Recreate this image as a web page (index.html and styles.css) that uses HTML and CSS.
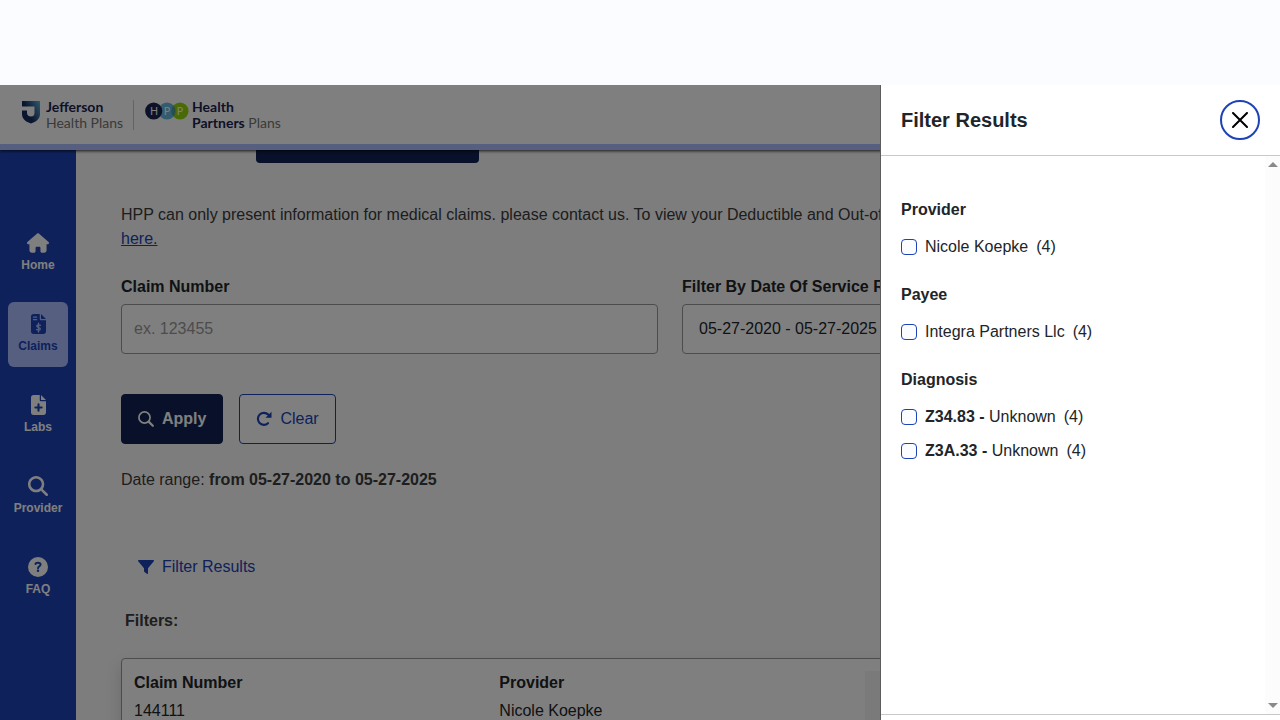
FILE: index.html
```html
<!DOCTYPE html>
<html lang="en">
<head>
<meta charset="utf-8">
<title>Claims</title>
<link rel="stylesheet" href="styles.css">
</head>
<body>
<div class="top-space"></div>
<div class="app">
  <header class="site-header">
    <a class="brand" href="#jefferson">
      <svg class="shield" viewBox="0 0 18 23" width="18" height="23" aria-hidden="true">
        <defs><linearGradient id="shield-fill" x1="0" y1="0.6" x2="1" y2="0"><stop offset="0.3" stop-color="#152a5c"/><stop offset="1" stop-color="#5fb4dc"/></linearGradient></defs>
        <path fill="url(#shield-fill)" d="M0 0H18V13C18 18 14 21 9 22.500C4 21 0 18 0 13V9.500H5V12C5 14 6.500 15.500 9 15.500C11.500 15.500 12.500 14 12.500 12V5.500H0Z"/>
      </svg>
      <span class="brand-text"><b>Jefferson</b><br>Health Plans</span>
    </a>
    <span class="brand-divider"></span>
    <a class="brand" href="#hpp">
      <svg class="dots" viewBox="0 0 44 18" width="44" height="18" aria-hidden="true">
        <circle cx="22" cy="9" r="8.600" fill="#68b8e0"/>
        <circle cx="35" cy="9" r="8.600" fill="#93d50a"/>
        <path d="M28.500 3.300A8.600 8.600 0 0 1 28.500 14.700A8.600 8.600 0 0 1 28.500 3.300Z" fill="#4d9f9c"/>
        <circle cx="8.700" cy="9" r="8.600" fill="#1b2450"/>
        <g class="dot-letters"><text x="9" y="13">H</text><text x="22" y="13">P</text><text x="35" y="13">P</text></g>
      </svg>
      <span class="brand-text"><b>Health</b><br><b>Partners</b> Plans</span>
    </a>
  </header>
  <div class="shell">
    <nav class="sidebar">
      <a class="nav-item" href="#home">
        <svg viewBox="0 0 576 512" width="22" height="20" aria-hidden="true"><path fill="currentColor" d="M575.800 255.500c0 18-15 32.100-32 32.100h-32l.7 160.200c0 35-28 64.200-64 64.200H392c-22 0-40-17.900-40-40V384c0-17.700-14.300-32-32-32H256c-17.700 0-32 14.300-32 32v88c0 22.100-18 40-40 40h-56c-35 0-64-28-64-64V287.600H32c-18 0-32-14-32-32.100 0-9 3-17 10-24L266.400 8c7-7 15-8 22-8s15 2 21 7L564.800 231.500c8 7 12 15 11 24z"/></svg>
        <span>Home</span>
      </a>
      <a class="nav-item active" href="#claims" aria-current="page">
        <svg viewBox="0 0 384 512" width="15" height="20" aria-hidden="true"><path fill="currentColor" d="M64 0C28.700 0 0 28.700 0 64V448c0 35.300 28.700 64 64 64H320c35.300 0 64-28.700 64-64V160H256c-17.700 0-32-14.300-32-32V0H64zM256 0V128H384L256 0z"/><g class="cutout" stroke-width="34"><path d="M64 80H144M64 144H144"/><path d="M192 232V462M240 290C200 270 150 275 148 308C146 350 240 334 238 382C236 420 180 420 142 398"/></g></svg>
        <span>Claims</span>
      </a>
      <a class="nav-item" href="#labs">
        <svg viewBox="0 0 384 512" width="15" height="20" aria-hidden="true"><path fill="currentColor" d="M64 0C28.700 0 0 28.700 0 64V448c0 35.300 28.700 64 64 64H320c35.300 0 64-28.700 64-64V160H256c-17.700 0-32-14.300-32-32V0H64zM256 0V128H384L256 0z"/><path class="cutout" stroke-width="54" d="M192 240V400M112 320H272"/></svg>
        <span>Labs</span>
      </a>
      <a class="nav-item" href="#provider">
        <svg viewBox="0 0 512 512" width="20" height="20" aria-hidden="true"><path fill="currentColor" d="M416 208c0 45.900-14.900 88.300-40 122.700L502.600 457.400c12.500 12.500 12.500 32.800 0 45.300s-32.800 12.500-45.300 0L330.700 376c-34.400 25.200-76.800 40-122.700 40C93.100 416 0 322.900 0 208S93.100 0 208 0S416 93.100 416 208zM208 352a144 144 0 1 0 0-288 144 144 0 1 0 0 288z"/></svg>
        <span>Provider</span>
      </a>
      <a class="nav-item" href="#faq">
        <svg viewBox="0 0 512 512" width="20" height="20" aria-hidden="true"><circle cx="256" cy="256" r="256" fill="currentColor"/><path class="cutout" stroke-width="50" d="M190 180C198 140 318 132 322 194C324 236 256 242 256 290"/><circle class="cutout-dot" cx="256" cy="352" r="32"/></svg>
        <span>FAQ</span>
      </a>
    </nav>
    <main class="content">
      <div class="banner-end"></div>
      <p class="notice">HPP can only present information for medical claims. please contact us. To view your Deductible and Out-of-Pocket information, please click<br><a href="#accumulators">here.</a></p>
      <form class="search">
        <div class="fields">
          <div class="field">
            <label for="claim-number">Claim Number</label>
            <input id="claim-number" type="text" placeholder="ex. 123455">
          </div>
          <div class="field">
            <label for="service-range">Filter By Date Of Service Range</label>
            <input id="service-range" class="range" type="text" value="05-27-2020 - 05-27-2025">
          </div>
        </div>
        <div class="actions">
          <button class="btn primary" type="button">
            <svg viewBox="0 0 16 16" width="16" height="16" aria-hidden="true"><g fill="none" stroke="currentColor"><circle cx="6.500" cy="6.500" r="5.600" stroke-width="1.700"/><path stroke-width="2.200" stroke-linecap="round" d="M10.900 10.900L14.800 14.800"/></g></svg>
            Apply
          </button>
          <button class="btn outline" type="button">
            <svg viewBox="0 0 16 16" width="16" height="16" aria-hidden="true"><path fill="none" stroke="currentColor" stroke-width="2.200" stroke-linecap="round" d="M12 12.200A6 6 0 1 1 12.200 3.600L14 5"/><path fill="currentColor" d="M15.500 .8V6.800H9.500Z"/></svg>
            Clear
          </button>
        </div>
      </form>
      <p class="date-range">Date range: <b>from 05-27-2020 to 05-27-2025</b></p>
      <button class="filter-link" type="button">
        <svg viewBox="0 0 16 14" width="16" height="14" aria-hidden="true"><path fill="currentColor" d="M.6 0H15.400C16 0 16.200.8 15.800 1.300L10 8.200V13.200C10 13.900 9.400 14.200 8.900 13.800L6.500 12C6.200 11.800 6 11.500 6 11.100V8.200L.2 1.300C-.2.8 0 0 .6 0Z"/></svg>
        Filter Results
      </button>
      <p class="filters"><b>Filters:</b></p>
      <section class="claim-card">
        <div class="cell"><b>Claim Number</b><span>144111</span></div>
        <div class="cell"><b>Provider</b><span>Nicole Koepke</span></div>
        <div class="cell"><div class="amounts"></div></div>
      </section>
    </main>
  </div>
  <div class="backdrop"></div>
  <aside class="drawer" aria-labelledby="drawer-title">
    <div class="drawer-head">
      <h2 id="drawer-title">Filter Results</h2>
      <button class="close" type="button" aria-label="Close">
        <svg viewBox="0 0 16 16" width="16" height="16" aria-hidden="true"><path fill="none" stroke="currentColor" stroke-width="2" stroke-linecap="round" d="M1 1L15 15M15 1L1 15"/></svg>
      </button>
    </div>
    <div class="drawer-body">
      <div class="groups">
        <fieldset>
          <legend>Provider</legend>
          <label class="option"><input type="checkbox"><span>Nicole Koepke</span><span>(4)</span></label>
        </fieldset>
        <fieldset>
          <legend>Payee</legend>
          <label class="option"><input type="checkbox"><span>Integra Partners Llc</span><span>(4)</span></label>
        </fieldset>
        <fieldset>
          <legend>Diagnosis</legend>
          <label class="option"><input type="checkbox"><span><b>Z34.83 -</b> Unknown</span><span>(4)</span></label>
          <label class="option"><input type="checkbox"><span><b>Z3A.33 -</b> Unknown</span><span>(4)</span></label>
        </fieldset>
      </div>
      <div class="track">
        <svg viewBox="0 0 10 5" width="10" height="5" aria-hidden="true"><path fill="#8a8a8a" d="M0 5L5 0L10 5Z"/></svg>
        <svg viewBox="0 0 10 5" width="10" height="5" aria-hidden="true"><path fill="#8a8a8a" d="M0 0L5 5L10 0Z"/></svg>
      </div>
    </div>
    <div class="drawer-foot"></div>
  </aside>
</div>
</body>
</html>
```

FILE: styles.css
```css
* { box-sizing: border-box; }
body {
  margin: 0;
  height: 100vh;
  display: flex;
  flex-direction: column;
  overflow: hidden;
  background: #fafcff;
  color: #212529;
  font: 16px/24px "Liberation Sans", Arial, sans-serif;
}
p, h2 { margin: 0; }
button, input { font: inherit; }
.top-space { flex: 0 0 85px; }
.app {
  position: relative;
  flex: 1;
  min-height: 0;
  display: flex;
  flex-direction: column;
  overflow: hidden;
}
.site-header {
  position: relative;
  flex: none;
  display: flex;
  align-items: center;
  height: 65px;
  padding-left: 22px;
  background: #fff;
  border-bottom: 6px solid #acbffe;
  box-shadow: 0 1px 3px rgba(0, 0, 0, .8);
}
.brand {
  display: flex;
  gap: 6px;
  color: #74756f;
  text-decoration: none;
  font: 14px/16px Lato, sans-serif;
}
.brand b { color: #1b2450; font-weight: 700; }
.shield { margin-top: 2px; }
.dots { margin-top: 3px; }
.brand:last-child { gap: 3px; }
.dot-letters { fill: #fff; font: 11px "Noto Sans", sans-serif; text-anchor: middle; }
.brand-divider { width: 1px; height: 30px; margin: 0 11px 0 10px; background: #c8c8c8; }
.shell { flex: 1; min-height: 0; display: flex; }
.sidebar {
  flex: 0 0 76px;
  display: flex;
  flex-direction: column;
  gap: 16px;
  padding: 71px 8px 0;
  background: #1d43b6;
}
.nav-item {
  display: flex;
  flex-direction: column;
  align-items: center;
  gap: 4px;
  padding: 12px 0 13px;
  border-radius: 6px;
  color: #fff;
  font-size: 12px;
  font-weight: bold;
  line-height: 16px;
  text-decoration: none;
}
.nav-item.active { background: #acbffe; color: #1d43b6; }
.cutout { fill: none; stroke: #1d43b6; stroke-linecap: round; }
.active .cutout { stroke: #acbffe; }
.cutout-dot { fill: #1d43b6; }
.content { flex: 1; min-width: 0; padding: 0 61px 0 45px; background: #fafafa; }
.banner-end { width: 223px; height: 13px; margin-left: 135px; border-radius: 0 0 4px 4px; background: #122254; }
.notice { margin-top: 40px; white-space: nowrap; }
.notice, .date-range, .filters { color: #3c3c3c; }
.notice a { color: #1d43b6; }
.search { margin-top: 24px; }
.fields { display: grid; grid-template-columns: 1fr 1fr; gap: 24px; }
.field { display: flex; flex-direction: column; gap: 5px; }
.field label { font-weight: bold; }
.field input {
  height: 50px;
  padding: 0 12px;
  border: 1px solid #999;
  border-radius: 4px;
  background: #fff;
  color: #212529;
}
.field .range { padding: 0 16px; }
.field input::placeholder { color: #999; }
.actions { display: flex; gap: 16px; margin-top: 40px; }
.btn {
  display: flex;
  align-items: center;
  gap: 8px;
  height: 50px;
  padding: 0 16px;
  border: 1px solid #122254;
  border-radius: 4px;
}
.primary { background: #122254; color: #fff; font-weight: bold; }
.outline { border-color: #1d43b6; background: #fff; color: #1d43b6; }
.date-range { margin-top: 24px; }
.filter-link {
  display: flex;
  align-items: center;
  gap: 8px;
  margin-top: 63px;
  padding: 0 17px;
  border: 0;
  background: none;
  color: #1d43b6;
  line-height: 24px;
}
.filters { margin: 30px 0 0 4px; }
.claim-card {
  display: grid;
  grid-template-columns: repeat(3, 1fr);
  margin-top: 25px;
  padding: 12px 0;
  border: 1px solid #999;
  border-radius: 4px;
  background: #fff;
  box-shadow: 0 8px 16px rgba(0, 0, 0, .15);
}
.cell { display: flex; flex-direction: column; gap: 4px; padding: 0 12px; }
.amounts { min-height: 120px; background: #f4f4f4; }
.backdrop { position: absolute; inset: 0; background: rgba(0, 0, 0, .5); }
.drawer {
  position: absolute;
  top: 0;
  right: 0;
  bottom: 0;
  width: 400px;
  display: flex;
  flex-direction: column;
  border-left: 1px solid #5c5c5c;
  background: #fff;
}
.drawer-head {
  display: flex;
  align-items: center;
  justify-content: space-between;
  padding: 15px 20px;
  border-bottom: 1px solid #c8c8c8;
}
.drawer-head h2 { font-size: 20px; }
.close {
  display: grid;
  place-items: center;
  width: 40px;
  height: 40px;
  padding: 0;
  border: 2px solid #1d43b6;
  border-radius: 50%;
  background: #fff;
  color: #000;
}
.drawer-body { flex: 1; min-height: 0; display: flex; }
.groups { flex: 1; padding: 42px 20px; }
fieldset { margin: 0 0 24px; padding: 0; border: 0; }
legend { margin-bottom: 13px; padding: 0; font-weight: bold; }
.option { display: flex; align-items: center; gap: 8px; }
.option + .option { margin-top: 10px; }
.option input {
  appearance: none;
  width: 16px;
  height: 16px;
  margin: 0;
  border: 1px solid #1d43b6;
  border-radius: 4px;
  background: #fafcff;
}
.track {
  width: 15px;
  display: flex;
  flex-direction: column;
  align-items: center;
  justify-content: space-between;
  padding: 6px 0;
  background: #fcfcfc;
}
.drawer-foot { height: 6px; border-top: 1px solid #c8c8c8; }
```
